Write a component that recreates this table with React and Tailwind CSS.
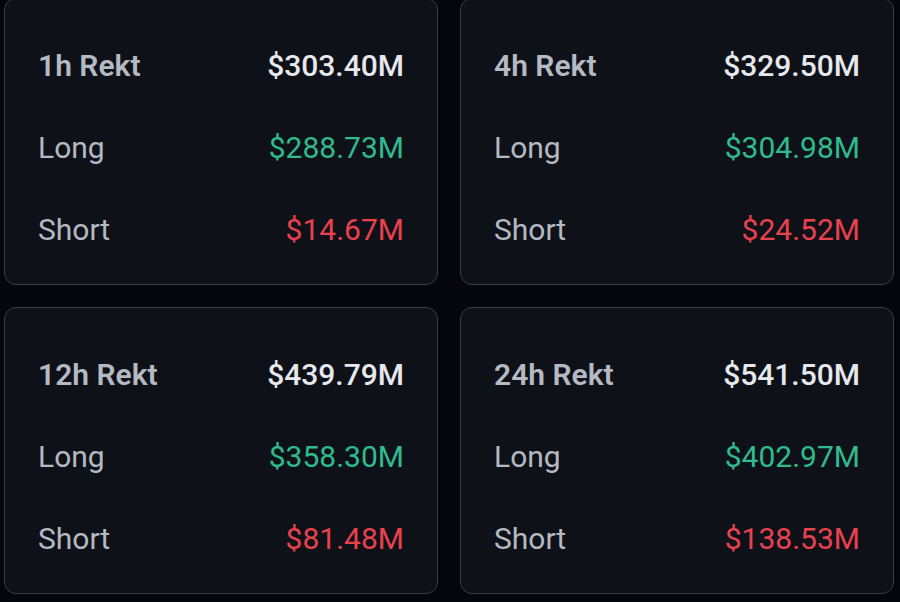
import React from 'react';

const stats = [
  { period: '1h', total: '$303.40M', long: '$288.73M', short: '$14.67M' },
  { period: '4h', total: '$329.50M', long: '$304.98M', short: '$24.52M' },
  { period: '12h', total: '$439.79M', long: '$358.30M', short: '$81.48M' },
  { period: '24h', total: '$541.50M', long: '$402.97M', short: '$138.53M' },
];

const RektCard = ({ period, total, long, short }) => (
  <div className="h-[287px] rounded-[12px] border border-[#3a3d46] bg-[#0f1119] px-[33px] pt-[49px] pb-[37px] flex flex-col gap-[46px] text-[30px] leading-[36px]">
    <div className="flex items-center justify-between">
      <span className="font-semibold text-[#b4b9c2]">{period} Rekt</span>
      <span className="font-medium text-[#e6e8ec]">{total}</span>
    </div>
    <div className="flex items-center justify-between">
      <span className="text-[#b4b9c2]">Long</span>
      <span className="text-[#2fbb8e]">{long}</span>
    </div>
    <div className="flex items-center justify-between">
      <span className="text-[#b4b9c2]">Short</span>
      <span className="text-[#e9424f]">{short}</span>
    </div>
  </div>
);

export default function App() {
  return (
    <div className="w-[900px] h-[602px] overflow-hidden bg-[#05060b] font-['Roboto',sans-serif]">
      <div className="-mt-[2px] pl-[4px] pr-[6px] grid grid-cols-2 gap-x-[22px] gap-y-[22px]">
        {stats.map(s => <RektCard key={s.period} {...s} />)}
      </div>
    </div>
  );
}
